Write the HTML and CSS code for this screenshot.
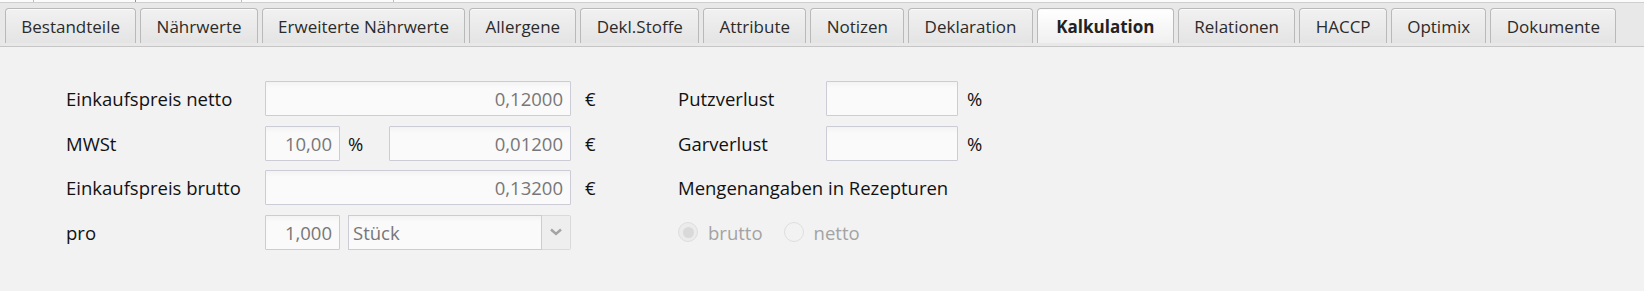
FILE: index.html
```html
<!DOCTYPE html>
<html lang="de">
<head>
    <meta charset="UTF-8">
    <title>Kalkulation</title>
    <link rel="stylesheet" href="styles.css">
</head>
<body>

    <div class="top-strip">
        <span class="tick t1"></span>
        <span class="tick t2"></span>
        <span class="tick t3"></span>
        <span class="tick t4"></span>
    </div>

    <div class="tab-header">
        <div class="tab">Bestandteile</div>
        <div class="tab">Nährwerte</div>
        <div class="tab">Erweiterte Nährwerte</div>
        <div class="tab">Allergene</div>
        <div class="tab">Dekl.Stoffe</div>
        <div class="tab">Attribute</div>
        <div class="tab">Notizen</div>
        <div class="tab">Deklaration</div>
        <div class="tab selected">Kalkulation</div>
        <div class="tab">Relationen</div>
        <div class="tab">HACCP</div>
        <div class="tab">Optimix</div>
        <div class="tab">Dokumente</div>
    </div>

    <div class="content">
        <div class="form-grid">
            <!-- Zeile 1 -->
            <span class="label">Einkaufspreis netto</span>
            <div class="fields">
                <input class="field num grow" type="text" value="0,12000" readonly>
            </div>
            <span class="unit">€</span>
            <span class="label">Putzverlust</span>
            <input class="field" type="text" value="" readonly>
            <span class="unit-right">%</span>

            <!-- Zeile 2 -->
            <span class="label">MWSt</span>
            <div class="fields">
                <input class="field num small" type="text" value="10,00" readonly>
                <span class="inline-unit">%</span>
                <input class="field num grow" type="text" value="0,01200" readonly>
            </div>
            <span class="unit">€</span>
            <span class="label">Garverlust</span>
            <input class="field" type="text" value="" readonly>
            <span class="unit-right">%</span>

            <!-- Zeile 3 -->
            <span class="label">Einkaufspreis brutto</span>
            <div class="fields">
                <input class="field num grow" type="text" value="0,13200" readonly>
            </div>
            <span class="unit">€</span>
            <span class="label span-right">Mengenangaben in Rezepturen</span>

            <!-- Zeile 4 -->
            <span class="label">pro</span>
            <div class="fields">
                <input class="field num small" type="text" value="1,000" readonly>
                <div class="combo">
                    <span class="combo-text">Stück</span>
                    <span class="combo-button">
                        <svg width="12" height="8" viewBox="0 0 12 8">
                            <polyline points="1,1.5 6,6 11,1.5" fill="none" stroke="#a3a3a3" stroke-width="2.4"/>
                        </svg>
                    </span>
                </div>
            </div>
            <span class="unit"></span>
            <div class="radio-group span-right">
                <span class="radio checked"></span>
                <span class="radio-text">brutto</span>
                <span class="radio"></span>
                <span class="radio-text">netto</span>
            </div>
        </div>
    </div>

</body>
</html>
```

FILE: styles.css
```css
body {
    margin: 0;
    padding: 0;
    height: 291px;
    overflow: hidden;
    background-color: #f2f2f2;
    font-family: "Open Sans", "Noto Sans", sans-serif;
    color: #111;
}

/* Rest der Tabelle oberhalb */
.top-strip {
    position: relative;
    height: 2px;
    background-color: #fbfbfb;
    border-bottom: 1px solid #cfcfcf;
}

.tick {
    position: absolute;
    top: 0;
    width: 1px;
    height: 2px;
    background-color: #b9b9c8;
}

.t1 { left: 33px; }
.t2 { left: 135px; background-color: #d08a2a; }
.t3 { left: 241px; }
.t4 { left: 393px; }

.tab-header {
    display: flex;
    gap: 4px;
    height: 44px;
    padding: 5px 0 0 5px;
    box-sizing: border-box;
    background-color: #e8e8e8;
    border-bottom: 1px solid #c6c6c6;
}

.tab {
    height: 35px;
    box-sizing: border-box;
    padding: 0 15.3px;
    display: flex;
    align-items: center;
    font-size: 17px;
    color: #2b2b2b;
    border: 1px solid #b9b9b9;
    border-bottom: none;
    border-radius: 4px 4px 0 0;
    background: linear-gradient(#f1f1f1, #e4e4e4);
    box-shadow: inset 0 1px 0 #fbfbfb;
    white-space: nowrap;
}

.tab.selected {
    padding: 0 18.5px;
    font-weight: bold;
    color: #222;
    background: linear-gradient(#ffffff, #f0f0f0);
}

.content {
    padding: 34px 0 0 66px;
}

.form-grid {
    display: grid;
    grid-template-columns: 199px 306px 107px 148px 132px auto;
    grid-template-rows: repeat(4, 35px);
    row-gap: 9.5px;
    align-items: center;
    font-size: 18.5px;
}

.label {
    white-space: nowrap;
}

.span-right {
    grid-column: 4 / 7;
}

.fields {
    display: flex;
    align-items: center;
    height: 35px;
}

.field {
    height: 35px;
    box-sizing: border-box;
    margin: 0;
    padding: 0 10px;
    border: 1px solid #ccccd6;
    border-radius: 1px;
    background: linear-gradient(#f3f3f3, #fafafa 6px, #fafafa);
    font-family: inherit;
    font-size: 18.5px;
    color: #777;
    outline: none;
    width: 132px;
}

.num {
    text-align: right;
    padding-right: 7px;
}

.grow {
    flex: 1;
    width: auto;
    min-width: 0;
}

.small {
    width: 75px;
}

.inline-unit {
    width: 49px;
    padding-left: 8px;
    box-sizing: border-box;
}

.unit {
    padding-left: 14px;
}

.unit-right {
    padding-left: 9px;
}

.combo {
    flex: 1;
    display: flex;
    height: 35px;
    margin-left: 8px;
}

.combo-text {
    flex: 1;
    display: flex;
    align-items: center;
    padding-left: 4px;
    border: 1px solid #ccccd6;
    background: linear-gradient(#f3f3f3, #fafafa 6px, #fafafa);
    color: #777;
}

.combo-button {
    width: 28px;
    display: flex;
    align-items: center;
    justify-content: center;
    border: 1px solid #dadada;
    border-left: none;
    border-radius: 0 2px 2px 0;
    background-color: #eeeeee;
}

.radio-group {
    display: flex;
    align-items: center;
    color: #a3a3a3;
}

.radio {
    width: 20px;
    height: 20px;
    box-sizing: border-box;
    border: 1px solid #dedede;
    border-radius: 50%;
    background-color: #f2f2f2;
    display: flex;
    align-items: center;
    justify-content: center;
}

.radio.checked {
    background-color: #ebebeb;
}

.radio.checked::after {
    content: "";
    width: 11px;
    height: 11px;
    border-radius: 50%;
    background-color: #d9d9d9;
}

.radio-text {
    margin-left: 10px;
    margin-right: 21px;
}
```
